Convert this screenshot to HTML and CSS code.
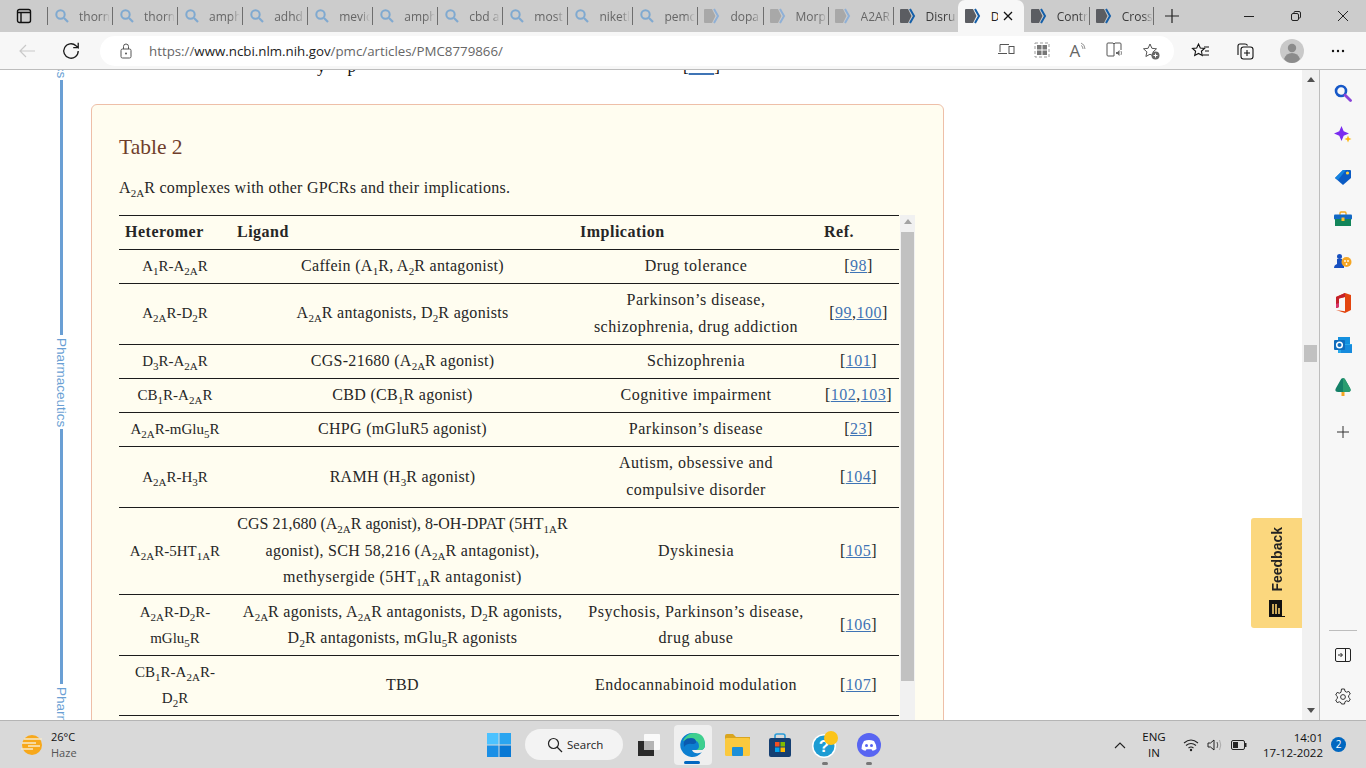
FILE: index.html
```html
<!DOCTYPE html>
<html lang="en">
<head>
    <meta charset="UTF-8">
    <meta name="viewport" content="width=device-width, initial-scale=1.0">
    <title>A2AR complexes with other GPCRs</title>
    <link rel="stylesheet" href="styles.css">
</head>
<body>
<svg class="defs" width="0" height="0">
    <symbol id="i-search" viewBox="0 0 16 16"><circle cx="6.5" cy="6.5" r="4.2" fill="none" stroke="#7fa9d0" stroke-width="2"/><path d="M10 10l4 4" stroke="#7fa9d0" stroke-width="2.2"/></symbol>
    <symbol id="i-pin" viewBox="0 0 18 16"><path d="M0 2q0-1 1-1h7l3.5 7L8 15H1q-1 0-1-1z" fill="#5b5d62"/><path d="M10 1l4 7-4 7" fill="none" stroke="#155fa8" stroke-width="2"/></symbol>
    <symbol id="i-pin-dim" viewBox="0 0 18 16"><path d="M0 2q0-1 1-1h7l3.5 7L8 15H1q-1 0-1-1z" fill="#a8a8a8"/><path d="M10 1l4 7-4 7" fill="none" stroke="#8fb0d6" stroke-width="2"/></symbol>
</svg>

<div class="tabstrip">
    <div class="tab-menu">
        <svg width="16" height="16" viewBox="0 0 16 16"><rect x="1.5" y="1.5" width="13" height="13" rx="2" fill="none" stroke="#111" stroke-width="1.4"/><path d="M1.5 4.5h13M5 4.5v10" stroke="#111" stroke-width="1.4"/></svg>
    </div>
    <div class="tab dim"><svg class="tab-icon find" width="16" height="16"><use href="#i-search"/></svg><span class="tab-label">thorn</span></div>
    <div class="tab dim"><svg class="tab-icon find" width="16" height="16"><use href="#i-search"/></svg><span class="tab-label">thorn</span></div>
    <div class="tab dim"><svg class="tab-icon find" width="16" height="16"><use href="#i-search"/></svg><span class="tab-label">amph</span></div>
    <div class="tab dim"><svg class="tab-icon find" width="16" height="16"><use href="#i-search"/></svg><span class="tab-label">adhd</span></div>
    <div class="tab dim"><svg class="tab-icon find" width="16" height="16"><use href="#i-search"/></svg><span class="tab-label">mevic</span></div>
    <div class="tab dim"><svg class="tab-icon find" width="16" height="16"><use href="#i-search"/></svg><span class="tab-label">amph</span></div>
    <div class="tab dim"><svg class="tab-icon find" width="16" height="16"><use href="#i-search"/></svg><span class="tab-label">cbd a</span></div>
    <div class="tab dim"><svg class="tab-icon find" width="16" height="16"><use href="#i-search"/></svg><span class="tab-label">most</span></div>
    <div class="tab dim"><svg class="tab-icon find" width="16" height="16"><use href="#i-search"/></svg><span class="tab-label">niketl</span></div>
    <div class="tab dim"><svg class="tab-icon find" width="16" height="16"><use href="#i-search"/></svg><span class="tab-label">pemc</span></div>
    <div class="tab dim"><svg class="tab-icon" width="18" height="16"><use href="#i-pin-dim"/></svg><span class="tab-label">dopa</span></div>
    <div class="tab dim"><svg class="tab-icon" width="18" height="16"><use href="#i-pin-dim"/></svg><span class="tab-label">Morp</span></div>
    <div class="tab dim"><svg class="tab-icon" width="18" height="16"><use href="#i-pin-dim"/></svg><span class="tab-label">A2AR</span></div>
    <div class="tab"><svg class="tab-icon" width="18" height="16"><use href="#i-pin"/></svg><span class="tab-label">Disru</span></div>
    <div class="tab active">
        <svg class="tab-icon" width="18" height="16"><use href="#i-pin"/></svg><span class="tab-label short">Disruption</span>
        <svg class="tab-close" width="10" height="10" viewBox="0 0 10 10"><path d="M1 1l8 8M9 1l-8 8" stroke="#111" stroke-width="1.3"/></svg>
    </div>
    <div class="tab"><svg class="tab-icon" width="18" height="16"><use href="#i-pin"/></svg><span class="tab-label">Contr</span></div>
    <div class="tab last"><svg class="tab-icon" width="18" height="16"><use href="#i-pin"/></svg><span class="tab-label">Cross</span></div>
    <div class="tab-new">
        <svg width="16" height="16" viewBox="0 0 16 16"><path d="M8 1v14M1 8h14" stroke="#222" stroke-width="1.2"/></svg>
    </div>
    <div class="win-controls">
        <svg width="12" height="12" viewBox="0 0 12 12"><path d="M1 6.5h10" stroke="#222"/></svg>
        <svg width="12" height="12" viewBox="0 0 12 12"><rect x="1.5" y="3.5" width="7" height="7" rx="1.5" fill="none" stroke="#222"/><path d="M4 3V2.5q0-1 1-1h4q1.500 0 1.500 1.500v4q0 1-1 1H9" fill="none" stroke="#222"/></svg>
        <svg width="12" height="12" viewBox="0 0 12 12"><path d="M1 1l10 10M11 1L1 11" stroke="#222"/></svg>
    </div>
</div>

<div class="toolbar">
    <div class="tool-btn">
        <svg width="18" height="16" viewBox="0 0 18 16"><path d="M17 8H2M8 2L2 8l6 6" fill="none" stroke="#c9c9c9" stroke-width="1.2"/></svg>
    </div>
    <div class="tool-btn">
        <svg width="20" height="20" viewBox="0 0 18 18"><path d="M15.500 9a6.500 6.500 0 1 1-2-4.700L15.500 6V1.500M15.500 6H11" fill="none" stroke="#1c1c1c" stroke-width="1.200"/></svg>
    </div>
    <div class="address">
        <svg class="lock" width="16" height="16" viewBox="0 0 16 16"><rect x="3" y="6" width="10" height="9" rx="1.500" fill="none" stroke="#555"/><path d="M5.500 6V3.500a2.500 2.500 0 0 1 5 0V6" fill="none" stroke="#555"/><circle cx="8" cy="10.500" r="1" fill="#555"/></svg>
        <span class="url">https://<b>www.ncbi.nlm.nih.gov</b>/pmc/articles/PMC8779866/</span>
        <div class="address-icons">
            <div class="addr-btn"><svg width="18" height="14" viewBox="0 0 18 14"><path d="M3 10V2.500h9M1 11.500h9" fill="none" stroke="#555"/><rect x="12" y="4.500" width="5" height="7" fill="none" stroke="#555"/></svg></div>
            <div class="addr-btn"><svg width="16" height="16" viewBox="0 0 16 16"><rect x="3" y="3" width="4.500" height="4.500" fill="#777"/><rect x="8.500" y="3" width="4.500" height="4.500" fill="#777"/><rect x="3" y="8.500" width="4.500" height="4.500" fill="#777"/><rect x="8.500" y="8.500" width="4.500" height="4.500" fill="#777"/><rect x="1" y="1" width="14" height="14" fill="none" stroke="#999" stroke-dasharray="3 2"/></svg></div>
            <div class="addr-btn"><span class="read-a">A</span><svg width="7" height="9" viewBox="0 0 7 9"><path d="M1 1q4 1.500 4 6M1 3.500q2 .5 2 3.500" fill="none" stroke="#777" stroke-width=".8"/></svg></div>
            <div class="addr-btn"><svg width="18" height="16" viewBox="0 0 18 16"><path d="M8 14H2q-1 0-1-1V2q0-1 1-1h5l1 1 1-1h5q1 0 1 1v6M8 2v12" fill="none" stroke="#555"/><path d="M10 10h1.500l2-2v6l-2-2H10z" fill="#666"/><path d="M15 9q1 2 0 4" fill="none" stroke="#888"/></svg></div>
            <div class="addr-btn"><svg width="18" height="18" viewBox="0 0 18 18"><path d="M8 2l1.900 4.300 4.600.5-3.400 3.100 1 4.600L8 12.200l-4.100 2.300 1-4.600L1.500 6.800l4.600-.5z" fill="none" stroke="#555"/><circle cx="13.500" cy="13.500" r="4" fill="#666"/><path d="M13.500 11.500v4M11.500 13.500h4" stroke="#fff"/></svg></div>
        </div>
    </div>
    <div class="tool-btn first-right"><svg width="20" height="18" viewBox="0 0 20 18"><path d="M7.500 2l1.800 4 4.200.4-3.100 2.900.9 4.200-3.800-2.100-3.800 2.100.9-4.200L1.500 6.400 5.700 6z" fill="none" stroke="#111" stroke-width="1.100"/><path d="M13 5h5M14 9h4M12 13h6" stroke="#111" stroke-width="1.100"/></svg></div>
    <div class="tool-btn"><svg width="20" height="20" viewBox="0 0 20 20"><path d="M3 14V5q0-2 2-2h5q2 0 2.500 1.500" fill="none" stroke="#111" stroke-width="1.100"/><rect x="6" y="6" width="12" height="12" rx="2.500" fill="#f7f7f7" stroke="#111" stroke-width="1.100"/><path d="M12 9v6M9 12h6" stroke="#111" stroke-width="1.100"/></svg></div>
    <div class="tool-btn profile-btn"><svg width="24" height="24" viewBox="0 0 24 24"><circle cx="12" cy="12" r="12" fill="#c9c9c9"/><circle cx="12" cy="9" r="4.200" fill="#8b8b8b"/><path d="M4 20q2-6 8-6t8 6q-3 4-8 4t-8-4" fill="#8b8b8b"/></svg></div>
    <div class="tool-btn dots-btn"><svg width="14" height="4" viewBox="0 0 14 4"><circle cx="2" cy="2" r="1.200" fill="#111"/><circle cx="7" cy="2" r="1.200" fill="#111"/><circle cx="12" cy="2" r="1.200" fill="#111"/></svg></div>
</div>

<div class="browser">
    <div class="page">
        <div class="rail">
            <span class="rail-label">Pharmaceutics</span>
            <span class="rail-bar"></span>
            <span class="rail-label">Pharmaceutics</span>
            <span class="rail-bar"></span>
            <span class="rail-label">Pharmaceutics</span>
        </div>
        <div class="article">
            <div class="cut-line"><span class="cut-y">y</span><span class="cut-p">p</span><span class="cut-ref">[<a href="#">&nbsp;&nbsp;&nbsp;&nbsp;&nbsp;&nbsp;</a>]</span></div>
            <div class="table-card">
                <h3 class="table-title">Table 2</h3>
                <p class="table-caption">A<sub>2A</sub>R complexes with other GPCRs and their implications.</p>
                <div class="table-wrap">
                    <table class="data-table">
                        <thead>
                            <tr><th class="col-het">Heteromer</th><th class="col-lig">Ligand</th><th class="col-imp">Implication</th><th class="col-ref">Ref.</th></tr>
                        </thead>
                        <tbody>
                            <tr><td>A<sub>1</sub>R-A<sub>2A</sub>R</td><td>Caffein (A<sub>1</sub>R, A<sub>2</sub>R antagonist)</td><td>Drug tolerance</td><td>[<a href="#">98</a>]</td></tr>
                            <tr><td>A<sub>2A</sub>R-D<sub>2</sub>R</td><td>A<sub>2A</sub>R antagonists, D<sub>2</sub>R agonists</td><td>Parkinson’s disease,<br>schizophrenia, drug addiction</td><td>[<a href="#">99</a>,<a href="#">100</a>]</td></tr>
                            <tr><td>D<sub>3</sub>R-A<sub>2A</sub>R</td><td>CGS-21680 (A<sub>2A</sub>R agonist)</td><td>Schizophrenia</td><td>[<a href="#">101</a>]</td></tr>
                            <tr><td>CB<sub>1</sub>R-A<sub>2A</sub>R</td><td>CBD (CB<sub>1</sub>R agonist)</td><td>Cognitive impairment</td><td>[<a href="#">102</a>,<a href="#">103</a>]</td></tr>
                            <tr><td>A<sub>2A</sub>R-mGlu<sub>5</sub>R</td><td>CHPG (mGluR5 agonist)</td><td>Parkinson’s disease</td><td>[<a href="#">23</a>]</td></tr>
                            <tr><td>A<sub>2A</sub>R-H<sub>3</sub>R</td><td>RAMH (H<sub>3</sub>R agonist)</td><td>Autism, obsessive and<br>compulsive disorder</td><td>[<a href="#">104</a>]</td></tr>
                            <tr><td>A<sub>2A</sub>R-5HT<sub>1A</sub>R</td><td><span class="tight">CGS 21,680 (A<sub>2A</sub>R agonist), 8-OH-DPAT (5HT<sub>1A</sub>R</span><br>agonist), SCH 58,216 (A<sub>2A</sub>R antagonist),<br><span class="loose">methysergide (5HT<sub>1A</sub>R antagonist)</span></td><td>Dyskinesia</td><td>[<a href="#">105</a>]</td></tr>
                            <tr><td>A<sub>2A</sub>R-D<sub>2</sub>R-<br>mGlu<sub>5</sub>R</td><td>A<sub>2A</sub>R agonists, A<sub>2A</sub>R antagonists, D<sub>2</sub>R agonists,<br>D<sub>2</sub>R antagonists, mGlu<sub>5</sub>R agonists</td><td>Psychosis, Parkinson’s disease,<br>drug abuse</td><td>[<a href="#">106</a>]</td></tr>
                            <tr class="row-last"><td>CB<sub>1</sub>R-A<sub>2A</sub>R-<br>D<sub>2</sub>R</td><td>TBD</td><td>Endocannabinoid modulation</td><td>[<a href="#">107</a>]</td></tr>
                        </tbody>
                    </table>
                    <div class="table-scroll">
                        <span class="arrow-up small"></span>
                        <span class="table-thumb"></span>
                    </div>
                </div>
            </div>
        </div>
        <div class="feedback">
            <span class="feedback-text">Feedback</span>
            <svg width="18" height="20" viewBox="0 0 18 20"><path d="M1 1h13v16h3v1H1z" fill="#111"/><path d="M4 5h2v10H4zM7 5h2v10H7zM10 9h2v6h-2z" fill="#caa85a"/></svg>
        </div>
    </div>

    <div class="page-scroll">
        <span class="arrow-up"></span>
        <span class="page-thumb"></span>
        <span class="arrow-down"></span>
    </div>

    <div class="sidebar">
        <div class="side-btn"><svg width="18" height="18" viewBox="0 0 18 18"><circle cx="7" cy="7" r="5" fill="none" stroke="#1658c8" stroke-width="2.600"/><path d="M11 11l5.500 5.500" stroke="#8a44d8" stroke-width="2.800" stroke-linecap="round"/></svg></div>
        <div class="side-btn"><svg width="18" height="18" viewBox="0 0 18 18"><path d="M7.500 0l2.200 5.300 5.300 2.200-5.300 2.200-2.200 5.300-2.200-5.300L0 7.500l5.300-2.200z" fill="#7a2cf0"/><path d="M14 9.500l1 2.500 2.500 1-2.500 1-1 2.500-1-2.500-2.500-1 2.500-1z" fill="#fdb813"/></svg></div>
        <div class="side-btn"><svg width="18" height="18" viewBox="0 0 18 18"><path d="M9 2h7q1 0 1 1v7l-8 7-8-7z" fill="#0b5bc4"/><path d="M1 10l8-8h3l-8 10z" fill="#1483e0"/><circle cx="13.500" cy="5" r="1.600" fill="#ffd23f"/></svg></div>
        <div class="side-btn"><svg width="18" height="16" viewBox="0 0 18 16"><path d="M6 4V2q0-1 1-1h4q1 0 1 1v2" fill="none" stroke="#f2a81d" stroke-width="1.300"/><rect y="3.500" width="18" height="5" rx="1" fill="#1268c4"/><rect x="1" y="8" width="16" height="7" fill="#12855a"/><rect x="7.500" y="6.500" width="3" height="3.500" fill="#fdc02f"/></svg></div>
        <div class="side-btn"><svg width="18" height="16" viewBox="0 0 18 16"><circle cx="5.500" cy="3.500" r="2.500" fill="#1750c0"/><path d="M0 15q0-3 3-4V6h5v5h2v4z" fill="#1750c0"/><circle cx="12.500" cy="9" r="5" fill="#f5a623"/><circle cx="11" cy="8" r=".9" fill="#fff"/><circle cx="14" cy="8" r=".9" fill="#fff"/><circle cx="12.500" cy="11" r=".9" fill="#fff"/></svg></div>
        <div class="side-btn"><svg width="16" height="20" viewBox="0 0 16 20"><path d="M10 0l6 2v15l-6 3-9-3 9 1.200V4L4 5.500V14L1 15V4z" fill="#e3450f"/><path d="M1 4l9-4v4L4 5.500V14l-3 1z" fill="#c4202a"/><path d="M1 11l3-1v4l-3 1z" fill="#d6336c"/></svg></div>
        <div class="side-btn"><svg width="18" height="16" viewBox="0 0 18 16"><rect x="4" y="0" width="12" height="7" fill="#1490df"/><rect x="4" y="7" width="14" height="9" fill="#28a8ea"/><path d="M7 8l11 0v8H7z" fill="#0a78d4" opacity=".6"/><rect y="3" width="11" height="10" rx="1" fill="#0f6cbd"/><circle cx="5.500" cy="8" r="2.800" fill="none" stroke="#fff" stroke-width="1.500"/></svg></div>
        <div class="side-btn"><svg width="16" height="18" viewBox="0 0 16 18"><path d="M8 0q2 0 3 3l4 7q2 4-2 4H3q-4 0-2-4l4-7q1-3 3-3z" fill="#148067"/><path d="M8 0q2 0 3 3l4 7q2 4-2 4H8z" fill="#2a9d70"/><rect x="6.500" y="14" width="3" height="4" fill="#f5a623"/></svg></div>
        <div class="side-btn plus-btn"><svg width="14" height="14" viewBox="0 0 14 14"><path d="M7 1v12M1 7h12" stroke="#333"/></svg></div>
        <div class="side-bottom">
            <span class="side-rule"></span>
            <div class="side-btn"><svg width="16" height="14" viewBox="0 0 16 14"><rect x=".5" y=".5" width="15" height="13" rx="1.500" fill="none" stroke="#222"/><path d="M10.500 .5v13" stroke="#222"/><path d="M3 7h4M5.500 5l2 2-2 2" fill="none" stroke="#222"/></svg></div>
            <div class="side-btn"><svg width="18" height="18" viewBox="0 0 18 18"><circle cx="9" cy="9" r="2.400" fill="none" stroke="#333"/><path d="M7.500 1h3l.5 2.300 1.600.9 2.200-.8 1.500 2.600-1.700 1.600v1.800l1.700 1.600-1.500 2.600-2.200-.8-1.600.9-.5 2.300h-3L7 14.700l-1.600-.9-2.200.8-1.500-2.600 1.700-1.600V8.600L1.700 7l1.500-2.600 2.200.8L7 4.300z" fill="none" stroke="#333"/></svg></div>
        </div>
    </div>
</div>

<div class="taskbar">
    <div class="weather">
        <svg width="24" height="24" viewBox="0 0 24 24"><circle cx="12" cy="12" r="10" fill="#f7a81b"/><path d="M4 6h18M2 10h14M8 13h12M1 16h12" stroke="#f8e9c9" stroke-width="1.500"/></svg>
        <div class="weather-text"><span class="temp">26°C</span><span class="haze">Haze</span></div>
    </div>
    <div class="task-icons">
        <div class="task-btn win-btn"><svg width="24" height="24" viewBox="0 0 24 24"><rect width="11.500" height="11.500" fill="#4cc2ff"/><rect x="12.500" width="11.500" height="11.500" fill="#2aa5f0"/><rect y="12.500" width="11.500" height="11.500" fill="#1a8fe6"/><rect x="12.500" y="12.500" width="11.500" height="11.500" fill="#0878d4"/></svg></div>
        <div class="search-pill">
            <svg width="16" height="16" viewBox="0 0 16 16"><circle cx="6.500" cy="6.500" r="5" fill="none" stroke="#222" stroke-width="1.200"/><path d="M10 10l5 5" stroke="#222" stroke-width="1.200"/></svg>
            <span>Search</span>
        </div>
        <div class="task-btn view-btn"><svg width="24" height="22" viewBox="0 0 24 22"><rect x="7" y="0" width="16" height="16" rx="1" fill="#fafafa"/><rect x="1" y="7" width="16" height="15" fill="#2a2a2a"/><rect x="7" y="7" width="10" height="9" fill="#b5b5b5"/></svg></div>
        <div class="task-btn edge-btn">
            <svg width="26" height="26" viewBox="0 0 26 26"><path d="M13 1a12 12 0 0 1 12 12q0 5-5 5H12q2 4 7 3 2 0 3-1a12 12 0 1 1-9-19" fill="#0c7fd0"/><path d="M3 9Q7 1 14 1q11 0 11 12 0 5-5 5h-4q3-1 3-4 0-6-7-6-6 0-9 1" fill="#3ecf8e"/><path d="M4 15q-2-9 7-9 5 0 5 4 0 2-4 2-5-1-8 3" fill="#0a5bb0"/></svg>
            <span class="edge-line"></span>
        </div>
        <div class="task-btn folder-btn"><svg width="25" height="22" viewBox="0 0 25 22"><path d="M0 2q0-2 2-2h6l3 3h14v4H0z" fill="#d9a520"/><rect y="4" width="25" height="18" rx="1.500" fill="#fbc93e"/><rect x="7" y="13" width="11" height="9" rx="1" fill="#1c8fd8"/></svg></div>
        <div class="task-btn store-btn"><svg width="22" height="24" viewBox="0 0 22 24"><path d="M6 5V3q0-2 2-2h6q2 0 2 2v2" fill="none" stroke="#2a9cd8" stroke-width="1.600"/><rect y="5" width="22" height="19" rx="2" fill="#153f72"/><rect x="6" y="9" width="4.500" height="4.500" fill="#f25022"/><rect x="11.500" y="9" width="4.500" height="4.500" fill="#7fba00"/><rect x="6" y="14.500" width="4.500" height="4.500" fill="#00a4ef"/><rect x="11.500" y="14.500" width="4.500" height="4.500" fill="#ffb900"/></svg></div>
        <div class="task-btn help-btn">
            <svg width="26" height="28" viewBox="0 0 26 28"><circle cx="12" cy="15" r="12" fill="#fff"/><circle cx="12" cy="15" r="10.500" fill="#1d9cd3"/><text x="12" y="21" text-anchor="middle" class="help-mark">?</text><circle cx="19" cy="7" r="7" fill="#fcc419"/></svg>
            <span class="run-dot"></span>
        </div>
        <div class="task-btn discord-btn">
            <svg width="24" height="24" viewBox="0 0 24 24"><circle cx="12" cy="12" r="12" fill="#5865f2"/><path d="M7 8q5-2 10 0 2.500 3.500 2.500 8-2 1.500-4 1.800l-1-1.500H9.500l-1 1.500q-2-.3-4-1.800 0-4.500 2.500-8" fill="#fff"/><circle cx="9.500" cy="12.500" r="1.500" fill="#5865f2"/><circle cx="14.500" cy="12.500" r="1.500" fill="#5865f2"/></svg>
            <span class="run-dot"></span>
        </div>
    </div>
    <div class="tray">
        <svg class="tray-chevron" width="12" height="8" viewBox="0 0 12 8"><path d="M1 7l5-5 5 5" fill="none" stroke="#222" stroke-width="1.100"/></svg>
        <div class="lang"><span>ENG</span><span>IN</span></div>
        <div class="tray-icons">
            <svg width="16" height="14" viewBox="0 0 16 14"><path d="M1 5q7-6 14 0M3 7.500q5-4 10 0M5.500 10q2.500-2 5 0" fill="none" stroke="#222" stroke-width="1.100"/><circle cx="8" cy="12" r="1.200" fill="#222"/></svg>
            <svg width="16" height="14" viewBox="0 0 16 14"><path d="M1 5h2.500L7 2v10L3.500 9H1z" fill="none" stroke="#222"/><path d="M10 4q1.500 3 0 6" fill="none" stroke="#555"/><path d="M12.500 2q2.500 5 0 10" fill="none" stroke="#aaa"/></svg>
            <svg width="16" height="10" viewBox="0 0 16 10"><rect x=".5" y=".5" width="13" height="9" rx="1.500" fill="none" stroke="#222"/><rect x="2" y="2" width="5" height="6" fill="#222"/><rect x="14" y="3" width="1.500" height="4" fill="#222"/></svg>
        </div>
        <div class="clock"><span>14:01</span><span>17-12-2022</span></div>
        <span class="notify">2</span>
    </div>
</div>
</body>
</html>
```

FILE: styles.css
```css
* {
    box-sizing: border-box;
}

html, body {
    margin: 0;
    width: 1366px;
    height: 768px;
    overflow: hidden;
}

body {
    display: flex;
    flex-direction: column;
    font-family: "Open Sans", "Noto Sans", sans-serif;
    background: #fff;
}

svg {
    display: block;
    flex: none;
}

.defs {
    position: absolute;
}

/* tab strip */
.tabstrip {
    height: 32px;
    background: #cccccc;
    display: flex;
    align-items: stretch;
    flex: none;
}

.tab-menu {
    width: 47px;
    padding-left: 16px;
    display: flex;
    align-items: center;
}

.tab {
    width: 65.05px;
    padding-left: 7px;
    display: flex;
    align-items: center;
    font-size: 12px;
    color: #3b3b3b;
    position: relative;
    flex: none;
}

.tab::before {
    content: "";
    position: absolute;
    left: 0;
    top: 7px;
    bottom: 7px;
    border-left: 1px solid #6e6e6e;
}

.tab.last::after {
    content: "";
    position: absolute;
    right: 0;
    top: 7px;
    bottom: 7px;
    border-left: 1px solid #6e6e6e;
}

.tab.active::before,
.tab.active + .tab::before {
    border: 0;
}

.tab.dim {
    color: #666;
}

.tab-icon {
    margin-right: 8px;
}

.tab-icon.find {
    margin-right: 9px;
}

.tab-label {
    width: 31px;
    overflow: hidden;
    white-space: nowrap;
    -webkit-mask-image: linear-gradient(90deg, #000 70%, transparent);
    mask-image: linear-gradient(90deg, #000 70%, transparent);
}

.tab-label.short {
    width: 7px;
    -webkit-mask-image: none;
    mask-image: none;
}

.tab.active {
    background: #f7f7f7;
    border-radius: 7px 7px 0 0;
    color: #222;
    width: 66px;
}

.tab-close {
    margin-left: 5px;
}

.tab-new {
    margin-left: 10px;
    display: flex;
    align-items: center;
}

.win-controls {
    margin-left: auto;
    width: 139px;
    padding: 0 17px 0 16px;
    display: flex;
    align-items: center;
    justify-content: space-between;
}

/* toolbar */
.toolbar {
    height: 38px;
    background: #f7f7f7;
    border-bottom: 1px solid #bdbdbd;
    padding: 1px 0 0 5px;
    display: flex;
    align-items: center;
    flex: none;
}

.tool-btn {
    width: 44px;
    display: flex;
    justify-content: center;
    align-items: center;
}

.address {
    width: 1074px;
    height: 30px;
    margin-left: 7px;
    padding: 0 5px 0 18px;
    background: #fff;
    border-radius: 15px;
    display: flex;
    align-items: center;
}

.url {
    margin-left: 15px;
    font-size: 13.3px;
    color: #666;
}

.url b {
    font-weight: 400;
    color: #1c1c1c;
}

.address-icons {
    margin-left: auto;
    display: flex;
}

.addr-btn {
    width: 36.3px;
    display: flex;
    justify-content: center;
    align-items: flex-start;
}

.read-a {
    font-size: 17px;
    line-height: 18px;
    color: #666;
}

.first-right {
    margin-left: 5px;
}

.profile-btn {
    margin-left: 3px;
}

.dots-btn {
    margin-left: 2px;
}

/* page area */
.browser {
    height: 650px;
    display: flex;
    flex: none;
}

.page {
    width: 1302px;
    height: 650px;
    padding-left: 54px;
    display: flex;
    overflow: hidden;
    position: relative;
}

.rail {
    width: 14px;
    margin-top: -81px;
    margin-right: 23px;
    display: flex;
    flex-direction: column;
    align-items: center;
    flex: none;
}

.rail-label {
    writing-mode: vertical-rl;
    font-family: "Liberation Sans", sans-serif;
    font-size: 13.5px;
    line-height: 14px;
    color: #6a9fd4;
    height: 87px;
    white-space: nowrap;
    flex: none;
}

.rail-bar {
    width: 3px;
    height: 255px;
    margin: 4px 0 3px;
    background: #6a9fd4;
    flex: none;
}

.article {
    width: 853px;
    flex: none;
}

.cut-line {
    height: 6px;
    overflow: hidden;
    font-family: "Liberation Serif", serif;
    font-size: 17px;
    line-height: 18px;
    color: #111;
    display: flex;
    align-items: flex-end;
    margin-bottom: 28px;
}

.cut-y {
    margin-left: 226px;
}

.cut-p {
    margin-left: 22px;
}

.cut-ref {
    margin-left: 327px;
}

.cut-ref a {
    color: #3f74b5;
    text-decoration-thickness: 2px;
}

.table-card {
    background: #fffdf0;
    border: 1px solid #eebfa8;
    border-radius: 6px;
    height: 640px;
    padding: 0 28px 0 27px;
    font-family: "Liberation Serif", serif;
    color: #262626;
}

.table-title {
    margin: 29px 0 0;
    font-size: 21.5px;
    line-height: 26px;
    font-weight: 400;
    color: #6f3e2c;
}

.table-caption {
    margin: 17px 0 0;
    font-size: 16px;
    line-height: 22px;
    letter-spacing: .27px;
}

.table-wrap {
    margin-top: 16px;
    display: flex;
    gap: 1px;
    height: 560px;
}

.data-table {
    width: 780px;
    table-layout: fixed;
    border-collapse: collapse;
    font-size: 16px;
    line-height: 26.6px;
    letter-spacing: .5px;
    text-align: center;
    white-space: nowrap;
    flex: none;
    align-self: flex-start;
}

.data-table th {
    text-align: left;
    padding: 3px 6px;
    border-top: 1px solid #1c1c1c;
    border-bottom: 1px solid #1c1c1c;
}

.data-table td {
    padding: 3.3px 2px;
    border-bottom: 1px solid #1c1c1c;
}

.data-table td:nth-child(1) {
    font-size: 15px;
    letter-spacing: 0;
}

.data-table td:nth-child(2) {
    letter-spacing: .3px;
}

.data-table .tight {
    letter-spacing: 0;
}

.data-table .loose {
    letter-spacing: .5px;
}

.data-table .row-last td {
    padding: 2.8px 2px;
}

.data-table sub,
.table-caption sub {
    font-size: 11px;
    line-height: 0;
    letter-spacing: 0;
}

.data-table a {
    color: #3f74b5;
}

.col-het {
    width: 112px;
}

.col-lig {
    width: 343px;
}

.col-imp {
    width: 244px;
}

.col-ref {
    width: 81px;
}

.table-scroll {
    width: 15px;
    height: 100%;
    background: #f1f1f1;
    padding: 0 1px;
    display: flex;
    flex-direction: column;
    align-items: center;
    flex: none;
}

.table-thumb {
    width: 13px;
    height: 449px;
    margin-top: 8px;
    background: #c1c1c1;
}

.arrow-up,
.arrow-down {
    width: 0;
    height: 0;
    border-left: 4px solid transparent;
    border-right: 4px solid transparent;
    flex: none;
}

.arrow-up {
    border-bottom: 5px solid #505050;
    margin-top: 7px;
}

.arrow-up.small {
    border-bottom-color: #a3a3a3;
    margin-top: 4px;
}

.arrow-down {
    border-top: 5px solid #505050;
    margin-top: auto;
    margin-bottom: 7px;
}

.feedback {
    position: absolute;
    right: 0;
    top: 448px;
    width: 51px;
    height: 110px;
    background: #fbd77e;
    border-radius: 3px 0 0 3px;
    padding: 9px 0 8px;
    display: flex;
    flex-direction: column;
    align-items: center;
    gap: 7px;
}

.feedback-text {
    writing-mode: vertical-rl;
    transform: rotate(180deg);
    font-family: "Liberation Sans", sans-serif;
    font-size: 14px;
    font-weight: 700;
    line-height: 16px;
    color: #222;
}

.page-scroll {
    width: 17px;
    background: #f1f1f1;
    display: flex;
    flex-direction: column;
    align-items: center;
    flex: none;
}

.page-thumb {
    width: 13px;
    height: 17px;
    margin-top: 263px;
    background: #c1c1c1;
}

.sidebar {
    width: 47px;
    background: #f7f7f7;
    border-left: 1px solid #bdbdbd;
    padding-top: 2px;
    display: flex;
    flex-direction: column;
    align-items: center;
    flex: none;
}

.side-btn {
    height: 42px;
    display: flex;
    align-items: center;
    justify-content: center;
    flex: none;
}

.plus-btn {
    margin-top: 3px;
}

.side-bottom {
    margin-top: auto;
    margin-bottom: 2px;
    display: flex;
    flex-direction: column;
    align-items: center;
}

.side-rule {
    width: 28px;
    height: 1px;
    background: #bdbdbd;
    margin-bottom: 3px;
}

/* taskbar */
.taskbar {
    height: 48px;
    background: #d9d9d9;
    border-top: 1px solid #b5b5b5;
    display: grid;
    grid-template-columns: 487px auto 1fr;
    align-items: center;
    flex: none;
}

.weather {
    padding-left: 20px;
    display: flex;
    align-items: center;
    gap: 7px;
}

.weather-text {
    display: flex;
    flex-direction: column;
    font-size: 11px;
    line-height: 16px;
}

.temp {
    color: #111;
}

.haze {
    color: #555;
}

.task-icons {
    display: flex;
    align-items: center;
}

.task-btn {
    position: relative;
    display: flex;
    justify-content: center;
    align-items: center;
}

.search-pill {
    width: 98px;
    height: 31px;
    margin-left: 14px;
    background: #f3f3f3;
    border-radius: 16px;
    padding-left: 22px;
    display: flex;
    align-items: center;
    gap: 4px;
    font-size: 11.5px;
    color: #222;
}

.view-btn {
    margin-left: 14px;
}

.edge-btn {
    width: 38px;
    height: 40px;
    margin-left: 13px;
    background: #efefef;
    border-radius: 4px;
}

.edge-line {
    position: absolute;
    left: 10px;
    bottom: 1px;
    width: 16px;
    height: 3px;
    border-radius: 2px;
    background: #0067c0;
}

.folder-btn {
    margin-left: 13px;
}

.store-btn {
    margin-left: 19px;
}

.help-btn {
    margin-left: 21px;
}

.help-mark {
    font-family: "Liberation Sans", sans-serif;
    font-size: 17px;
    font-weight: 700;
    fill: #fff;
}

.discord-btn {
    margin-left: 19px;
}

.run-dot {
    position: absolute;
    left: 50%;
    bottom: -6px;
    width: 6px;
    height: 3px;
    margin-left: -3px;
    border-radius: 2px;
    background: #777;
}

.discord-btn .run-dot {
    bottom: -8px;
}

.tray {
    padding-right: 20px;
    display: flex;
    align-items: center;
    justify-content: flex-end;
    color: #111;
    font-size: 11px;
}

.tray-chevron {
    margin-right: 13px;
}

.lang {
    width: 30px;
    display: flex;
    flex-direction: column;
    align-items: center;
    line-height: 16px;
    font-size: 11.5px;
    margin-right: 14px;
}

.tray-icons {
    display: flex;
    align-items: center;
    gap: 8px;
    margin-right: 16px;
}

.clock {
    display: flex;
    flex-direction: column;
    align-items: flex-end;
    line-height: 15px;
    font-size: 11.5px;
    margin-right: 8px;
}

.notify {
    width: 15px;
    height: 15px;
    border-radius: 50%;
    background: #0067c0;
    color: #fff;
    font-size: 10px;
    line-height: 15px;
    text-align: center;
}
```
